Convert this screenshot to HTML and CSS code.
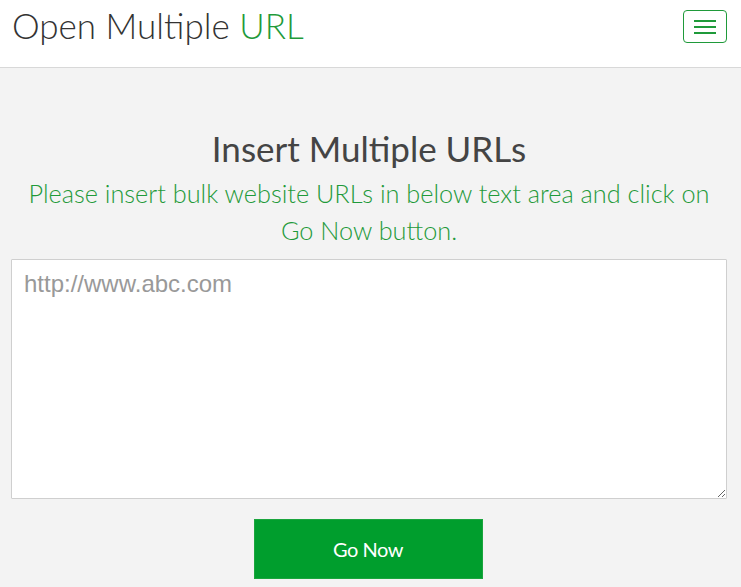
FILE: index.html
```html
<!DOCTYPE html>
<html>
<head>
<meta charset="utf-8">
<link rel="stylesheet" href="styles.css">
</head>
<body>
<header class="topbar">
  <div class="brand">Open Multiple <span class="brand-accent">URL</span></div>
  <button class="menu-btn" aria-label="Menu">
    <span class="bar"></span><span class="bar"></span><span class="bar"></span>
  </button>
</header>
<main class="content">
  <h1 class="title">Insert Multiple URLs</h1>
  <p class="subtitle">Please insert bulk website URLs in below text area and click on Go Now button.</p>
  <textarea class="urls" placeholder="http://www.abc.com"></textarea>
  <div class="actions">
    <button class="go-btn">Go Now</button>
  </div>
</main>
</body>
</html>
```
FILE: styles.css
```css
html, body {
  margin: 0;
  padding: 0;
  background: #f3f3f3;
  font-family: Lato, "Open Sans", sans-serif;
}
.topbar {
  background: #fff;
  height: 67px;
  border-bottom: 1px solid #d8d8d8;
  display: flex;
  align-items: flex-start;
  justify-content: space-between;
  padding: 0 14px 0 12px;
  box-sizing: content-box;
}
.brand {
  font-weight: 300;
  font-size: 35px;
  color: #333;
  line-height: 50px;
}
.brand-accent {
  color: #1f9a3a;
}
.menu-btn {
  margin-top: 10px;
  width: 44px;
  height: 33px;
  border: 1px solid #1f9a3a;
  border-radius: 4px;
  background: #fff;
  display: flex;
  flex-direction: column;
  align-items: center;
  justify-content: center;
  gap: 4px;
  padding: 0;
}
.bar {
  display: block;
  width: 22px;
  height: 2px;
  background: #1f9a3a;
}
.content {
  padding: 0 14px 0 11px;
  text-align: center;
}
.title {
  font-weight: 400;
  font-size: 35px;
  color: #444;
  margin: 0;
  padding-top: 56px;
  line-height: 48px;
}
.subtitle {
  font-weight: 300;
  font-size: 25.3px;
  color: #1f9a3a;
  line-height: 37px;
  margin: 3px 0 0;
  padding: 0 8px;
}
.urls {
  display: block;
  width: 100%;
  box-sizing: border-box;
  height: 240px;
  margin-top: 10px;
  border: 1px solid #cfcfcf;
  background: #fff;
  padding: 10px 12px;
  font-family: "Liberation Sans", Arial, sans-serif;
  font-size: 24px;
  color: #333;
  border-radius: 1px;
}
.urls::placeholder {
  color: #999;
}
.actions {
  display: flex;
  justify-content: center;
  padding-top: 20px;
  padding-right: 2px;
}
.go-btn {
  width: 229px;
  height: 60px;
  background: #009e2d;
  border: 1px solid #1aa53d;
  color: #fff;
  font-family: Lato, sans-serif;
  font-size: 20px;
  font-weight: 400;
  letter-spacing: -0.5px;
}
```
